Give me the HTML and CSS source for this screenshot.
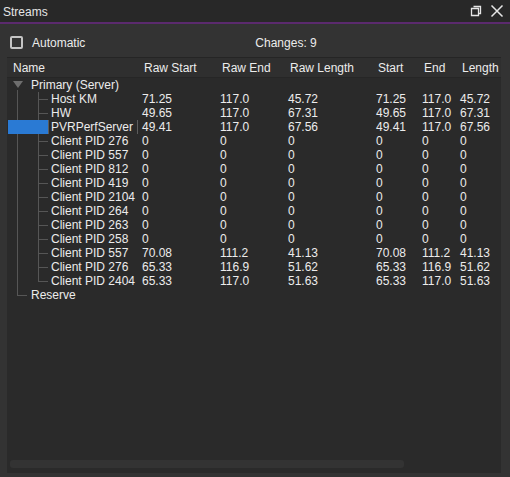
FILE: index.html
```html
<!DOCTYPE html>
<html lang="en">
<head>
  <meta charset="UTF-8">
  <title>Streams</title>
  <link rel="stylesheet" href="styles.css">
</head>
<body>
  <div class="titlebar">
    <span class="title">Streams</span>
    <div class="win-buttons">
      <svg width="12" height="12" viewBox="0 0 12 12">
        <path d="M3.5 1.5h7v7h-2M1.5 3.5h7v7h-7z" fill="none" stroke="#e6e6e6" stroke-width="1.3"/>
      </svg>
      <svg width="14" height="14" viewBox="0 0 14 14">
        <path d="M1.5 1.5l11 11M12.5 1.5l-11 11" stroke="#e6e6e6" stroke-width="1.5"/>
      </svg>
    </div>
  </div>

  <div class="toolbar">
    <label class="check"><span class="box"></span>Automatic</label>
    <span class="changes">Changes: 9</span>
  </div>

  <div class="tree">
    <table>
      <colgroup>
        <col style="width:131px"><col style="width:78px"><col style="width:68px">
        <col style="width:88px"><col style="width:46px"><col style="width:38px"><col>
      </colgroup>
      <thead>
        <tr>
          <th>Name</th><th>Raw Start</th><th>Raw End</th><th>Raw Length</th>
          <th>Start</th><th>End</th><th>Length</th>
        </tr>
      </thead>
      <tbody id="rows"></tbody>
    </table>
    <div class="hscroll"></div>
  </div>

  <script>
    const streams = [
      ["Host KM", "71.25", "117.0", "45.72", "71.25", "117.0", "45.72"],
      ["HW", "49.65", "117.0", "67.31", "49.65", "117.0", "67.31"],
      ["PVRPerfServer", "49.41", "117.0", "67.56", "49.41", "117.0", "67.56"],
      ["Client PID 276", "0", "0", "0", "0", "0", "0"],
      ["Client PID 557", "0", "0", "0", "0", "0", "0"],
      ["Client PID 812", "0", "0", "0", "0", "0", "0"],
      ["Client PID 419", "0", "0", "0", "0", "0", "0"],
      ["Client PID 2104", "0", "0", "0", "0", "0", "0"],
      ["Client PID 264", "0", "0", "0", "0", "0", "0"],
      ["Client PID 263", "0", "0", "0", "0", "0", "0"],
      ["Client PID 258", "0", "0", "0", "0", "0", "0"],
      ["Client PID 557", "70.08", "111.2", "41.13", "70.08", "111.2", "41.13"],
      ["Client PID 276", "65.33", "116.9", "51.62", "65.33", "116.9", "51.62"],
      ["Client PID 2404", "65.33", "117.0", "51.63", "65.33", "117.0", "51.63"],
    ];

    const body = document.getElementById("rows");
    let html = `<tr><td><div class="name"><span class="guide open"><span class="arrow"></span></span><span class="label">Primary (Server)</span></div></td><td></td><td></td><td></td><td></td><td></td><td></td></tr>`;
    streams.forEach((s, i) => {
      const last = i === streams.length - 1 ? " last" : "";
      const sel = s[0] === "PVRPerfServer" ? " selected" : "";
      html += `<tr class="${sel}"><td><div class="name"><span class="guide line"></span><span class="branch${last}"></span><span class="label">${s[0]}</span></div></td>`;
      for (let c = 1; c < s.length; c++) html += `<td>${s[c]}</td>`;
      html += `</tr>`;
    });
    html += `<tr><td><div class="name"><span class="guide end"></span><span class="label">Reserve</span></div></td><td></td><td></td><td></td><td></td><td></td><td></td></tr>`;
    body.innerHTML = html;
  </script>
</body>
</html>
```

FILE: styles.css
```css
body {
  margin: 0;
  width: 510px;
  height: 477px;
  background: #333333;
  color: #ececec;
  font-family: "Liberation Sans", Arial, sans-serif;
  font-size: 12px;
  overflow: hidden;
}
.titlebar {
  height: 22px;
  background: #282828;
  border-bottom: 2px solid #5b2a6e;
  display: flex;
  align-items: center;
  justify-content: space-between;
  padding: 0 6px 0 3px;
}
.title {
  font-size: 12px;
  padding-top: 2px;
  color: #e6e6e6;
}
.win-buttons {
  display: flex;
  align-items: center;
  gap: 8px;
}
.toolbar {
  height: 29px;
  padding-top: 4px;
  display: flex;
  align-items: center;
}
.check {
  display: flex;
  align-items: center;
  margin-left: 10px;
}
.box {
  width: 9px;
  height: 9px;
  border: 2px solid #c4c4c4;
  border-radius: 2px;
  margin-right: 9px;
}
.changes {
  margin-left: 170px;
}
.tree {
  margin: 0 9px 0 7px;
  height: 416px;
  background: #2a2a2a;
  position: relative;
}
table {
  width: 100%;
  border-collapse: collapse;
  table-layout: fixed;
}
th {
  height: 19px;
  padding: 0 0 0 6px;
  text-align: left;
  font-weight: normal;
  background: #2f2f2f;
  border-top: 1px solid #252525;
  border-bottom: 1px solid #262626;
  white-space: nowrap;
  overflow: hidden;
}
td {
  height: 14px;
  padding: 0 0 0 4px;
  line-height: 14px;
  white-space: nowrap;
  overflow: hidden;
}
td:first-child {
  padding-left: 1px;
}
.name {
  display: flex;
  height: 14px;
}
.guide, .branch {
  flex: none;
  height: 14px;
}
.guide {
  width: 21px;
}
.guide.line {
  background: linear-gradient(#565656, #565656) 9px 0 / 1px 100% no-repeat;
}
.guide.open {
  display: flex;
  justify-content: center;
  background: linear-gradient(#565656, #565656) 9px 12px / 1px 2px no-repeat;
}
.guide.end {
  background:
    linear-gradient(#565656, #565656) 9px 0 / 1px 8px no-repeat,
    linear-gradient(#565656, #565656) 9px 7px / 10px 1px no-repeat;
}
.arrow {
  margin-top: 3px;
  margin-right: 1px;
  width: 0;
  height: 0;
  border-left: 5px solid transparent;
  border-right: 5px solid transparent;
  border-top: 7px solid #6e6e6e;
}
.branch {
  width: 19px;
  background:
    linear-gradient(#565656, #565656) 9px 0 / 1px 100% no-repeat,
    linear-gradient(#565656, #565656) 9px 7px / 10px 1px no-repeat;
}
.branch.last {
  background:
    linear-gradient(#565656, #565656) 9px 0 / 1px 8px no-repeat,
    linear-gradient(#565656, #565656) 9px 7px / 10px 1px no-repeat;
}
.label {
  flex: 1;
  padding-left: 2px;
  border: 1px solid transparent;
  margin: -1px 0;
  line-height: 14px;
}
.guide.open + .label, .guide.end + .label {
  padding-left: 1px;
}
.selected .guide, .selected .branch {
  background: #2a7ad4;
}
.selected .label {
  border-color: #5c5c5c;
}
.hscroll {
  position: absolute;
  left: 3px;
  bottom: 5px;
  width: 394px;
  height: 8px;
  border-radius: 3px;
  background: #333333;
}
```
